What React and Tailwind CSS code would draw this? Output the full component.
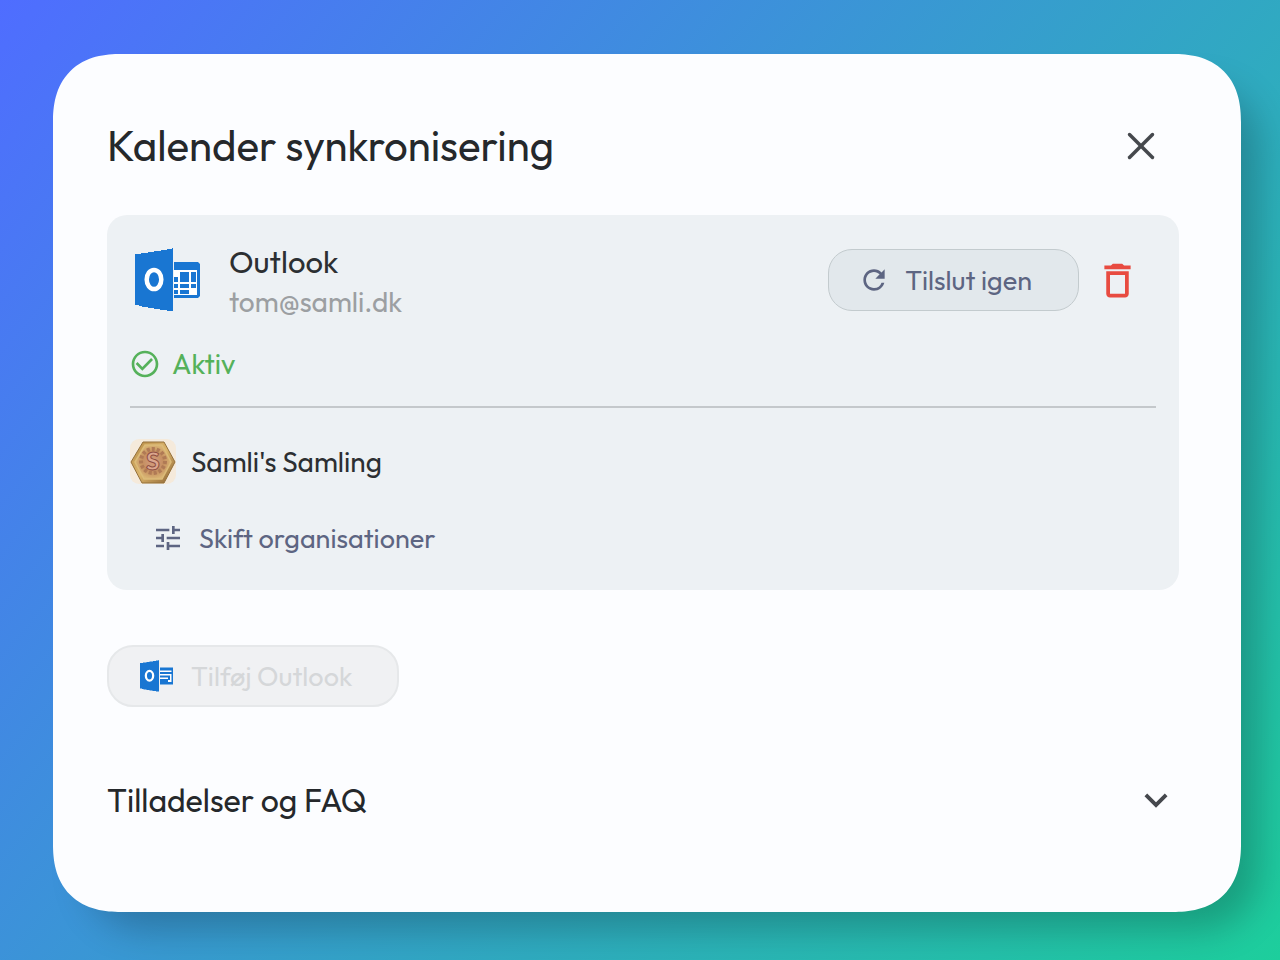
import React, { useState } from "react";
import {
  MdRefresh,
  MdDeleteOutline,
  MdCheckCircleOutline,
  MdTune,
  MdExpandMore,
} from "react-icons/md";
import { X } from "lucide-react";

const OutlookCover = () => (
  <>
    <path
      d="M0 6h6V5h7V4h6V3h7V2h6V1h5V0h1v63h-6v-1h-7v-1h-6v-1h-6v-1H7v-1H4v-1H0z"
      fill="#1976d2"
    />
    <ellipse cx="19" cy="31.500" rx="7.300" ry="9.600" fill="none" stroke="#fff" strokeWidth="4.500" />
  </>
);

const OutlookCalendarLogo = () => (
  <svg viewBox="0 0 66 64" className="h-16 w-[66px] shrink-0" aria-hidden="true">
    <path d="M39 14h24l2 2v32l-2 2H39z" fill="#1976d2" />
    <path d="M39 22h23v25H39z" fill="#fff" />
    <g fill="#1976d2">
      <path d="M45 24h9v10h-9zM56 24h5v10h-5z" />
      <path d="M39 29h4v5h-4zM39 36h4v4h-4zM45 36h9v4h-9zM56 36h5v4h-5z" />
      <path d="M39 42h4v4h-4zM45 42h9v4h-9z" />
    </g>
    <OutlookCover />
  </svg>
);

const OutlookMailLogo = () => (
  <svg viewBox="0 0 66 64" className="h-8 w-[33px] shrink-0" aria-hidden="true">
    <path d="M40 15h26v34H40z" fill="#1976d2" />
    <path d="M40 21h23v3H40zM40 28h20v3H40zM40 35h16v3H40zM60 28h3v16h-7v-4h4z" fill="#fff" />
    <OutlookCover />
  </svg>
);

const OrganisationAvatar = () => (
  <svg viewBox="0 0 46 46" className="size-[46px] shrink-0" aria-hidden="true">
    <defs>
      <linearGradient id="gold" x1="0" y1="0" x2="1" y2="1">
        <stop offset="0" stopColor="#b58a45" />
        <stop offset="0.500" stopColor="#dcb56c" />
        <stop offset="1" stopColor="#8a6130" />
      </linearGradient>
      <radialGradient id="coin">
        <stop offset="0" stopColor="#d39c80" />
        <stop offset="0.600" stopColor="#c58f60" />
        <stop offset="1" stopColor="#d9b473" />
      </radialGradient>
    </defs>
    <rect width="46" height="45" rx="9" fill="#f5eadb" />
    <path d="M13 3h21l11 20-11 21H12L1 23z" fill="url(#gold)" stroke="#94703a" />
    <path d="M15 6h17l9 17-9 17H14L5 23z" fill="url(#coin)" stroke="#dcbb78" strokeWidth="1.500" />
    <circle cx="23" cy="22" r="12" fill="none" stroke="#b07a55" strokeWidth="4" strokeDasharray="3 2" />
    <text
      x="23"
      y="31"
      textAnchor="middle"
      fontFamily="Lato, sans-serif"
      fontSize="25"
      fontWeight="900"
      fill="#dba68e"
      stroke="#8f4f42"
    >
      S
    </text>
  </svg>
);

const AccountCard = ({ name, email, organisation }) => (
  <section className="rounded-[20px] bg-[#edf1f4] px-[23px] pt-5 pb-7">
    <div className="flex min-h-[90px] items-center">
      <div className="pl-[5px]">
        <OutlookCalendarLogo />
      </div>
      <div className="ml-7 min-w-0 flex-1 pt-[3px]">
        <h2 className="text-[31px] leading-10 text-[#2c2f32]">{name}</h2>
        <p className="text-[28px] leading-10 text-[#9c9fa2]">{email}</p>
      </div>
      <button
        type="button"
        className="flex h-[62px] items-center gap-[15px] rounded-3xl border border-[#c3cbce] bg-[#e2e8ec] pr-[46px] pl-[29px] text-[27px] text-[#5d6582]"
      >
        <MdRefresh className="size-8" />
        Tilslut igen
      </button>
      <button type="button" aria-label="Slet" className="mx-4 text-[#e84b40]">
        <MdDeleteOutline className="size-[45px]" />
      </button>
    </div>

    <div className="mt-[23px] flex h-8 items-center gap-[11px] text-[28px] text-[#55b15a]">
      <MdCheckCircleOutline className="-ml-px size-8" />
      Aktiv
    </div>

    <hr className="mt-[26px] border-t-2 border-[#c4c8cb]" />

    <div className="mt-[31px] flex items-center gap-[15px] text-[28px] leading-10 text-[#2c2f32]">
      <OrganisationAvatar />
      {organisation}
    </div>

    <button
      type="button"
      className="mt-[29px] ml-[22px] flex h-12 items-center gap-[15px] text-[27px] text-[#5d6582]"
    >
      <MdTune className="size-8" />
      Skift organisationer
    </button>
  </section>
);

const App = () => {
  const [open, setOpen] = useState(false);

  return (
    <main className="flex min-h-screen flex-col bg-linear-[130deg] from-[#4f6dff] to-[#1dce9c] pt-[54px] pr-[39px] pb-12 pl-[53px] font-['Outfit','Lato',sans-serif]">
      <div
        role="dialog"
        aria-labelledby="dialog-title"
        className="flex-1 rounded-[68px] bg-[#fcfdff] pt-[60px] pr-[62px] pb-16 pl-[54px] shadow-[26px_26px_36px_-8px_rgba(0,0,0,0.22)] [corner-shape:superellipse(1.25)]"
      >
        <header className="flex h-16 items-center justify-between">
          <h1 id="dialog-title" className="text-[42px] leading-[56px] text-[#25282b]">
            Kalender synkronisering
          </h1>
          <button type="button" aria-label="Luk" className="mr-[15px] text-[#45484d]">
            <X className="size-[46px]" strokeWidth={1.8} />
          </button>
        </header>

        <div className="mt-[37px]">
          <AccountCard name="Outlook" email="tom@samli.dk" organisation="Samli's Samling" />
        </div>

        <button
          type="button"
          disabled
          className="mt-[55px] flex h-[62px] items-center gap-[18px] rounded-[26px] border-2 border-[#e6e8ea] bg-[#f0f1f3] pr-[45px] pl-[31px] text-[27px] text-[#d5d7d9]"
        >
          <OutlookMailLogo />
          Tilføj Outlook
        </button>

        <button
          type="button"
          aria-expanded={open}
          onClick={() => setOpen(!open)}
          className="mt-[69px] flex h-12 w-full items-center justify-between text-[32px] text-[#25282b]"
        >
          Tilladelser og FAQ
          <MdExpandMore className={`size-[46px] text-[#45484d] ${open ? "rotate-180" : ""}`} />
        </button>
      </div>
    </main>
  );
};

export default App;
